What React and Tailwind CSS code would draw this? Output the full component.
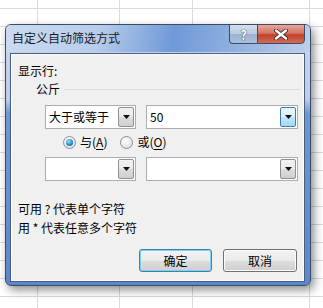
import React from 'react';

const FONT = '"Noto Sans CJK SC", "Noto Sans", sans-serif';

// spreadsheet backdrop: column widths put the grid lines at 37, 119, 192, 309
const COLS = [38, 82, 73, 117];
const ROWS = [9, ...Array(17).fill(18)];

function Sheet() {
  return (
    <div className="flex flex-col">
      {ROWS.map((h, i) => (
        <div key={i} className="flex border-b border-[#dadada]" style={{ height: h }}>
          {COLS.map((w, j) => (
            <div key={j} className="shrink-0 border-r border-[#dadada]" style={{ width: w }} />
          ))}
          <div className="flex-1" />
        </div>
      ))}
    </div>
  );
}

function Arrow() {
  return (
    <svg width="7" height="4" viewBox="0 0 7 4">
      <path d="M0 0h7L3.5 4z" fill="#111" />
    </svg>
  );
}

function Combo({ value, width, focused }) {
  return (
    <div
      className="flex h-[24px] items-stretch border border-[#abadb3] bg-white"
      style={{ width }}
    >
      <div className="flex-1 pl-[3px] text-[12px] leading-[22px] text-black">{value}</div>
      <div
        className={`m-px flex w-[16px] items-center justify-center rounded-[2px] border ${
          focused
            ? 'border-[#3c7fb1] bg-[linear-gradient(to_bottom,#eaf6fd,#d9f0fc_50%,#bee6fd_51%,#a7d9f5)]'
            : 'border-[#8e8f8f] bg-[linear-gradient(to_bottom,#f2f2f2,#ebebeb_50%,#dddddd_51%,#cfcfcf)]'
        }`}
      >
        <Arrow />
      </div>
    </div>
  );
}

function Radio({ checked, label, hot }) {
  return (
    <div className="flex items-center gap-[4px]">
      <div className="flex h-[13px] w-[13px] items-center justify-center rounded-full border border-[#8e8f8f] bg-[radial-gradient(circle_at_40%_35%,#ffffff,#d6d6d6)]">
        {checked && (
          <div className="h-[7px] w-[7px] rounded-full bg-[radial-gradient(circle_at_40%_35%,#9fdcf7,#1c84c6_60%,#0d5a94)]" />
        )}
      </div>
      <span className="text-[12px] leading-[16px] text-black">
        {label}(<span className="underline underline-offset-2">{hot}</span>)
      </span>
    </div>
  );
}

function Button({ children, primary }) {
  return (
    <div
      className={`flex h-[23px] items-center justify-center rounded-[3px] border text-[12px] text-black ${
        primary
          ? 'w-[73px] border-[#3c7fb1] shadow-[inset_0_0_0_1px_#7fd0f5]'
          : 'w-[74px] border-[#707070] shadow-[inset_0_0_0_1px_#fbfbfb]'
      } bg-[linear-gradient(to_bottom,#f2f2f2,#ebebeb_50%,#dddddd_51%,#cfcfcf)]`}
    >
      {children}
    </div>
  );
}

export default function App() {
  return (
    <div className="relative h-[308px] w-[323px] overflow-hidden bg-white" style={{ fontFamily: FONT }}>
      <Sheet />

      {/* dialog window */}
      <div className="absolute left-[5px] top-[24px] flex h-[262px] w-[306px] flex-col rounded-[6px] border border-[#3a4b63] bg-[linear-gradient(to_bottom,#c4d6ee_0px,#bccfeb_74px,#6d98d6_88px,#5a88cf_100%)] shadow-[3px_4px_10px_rgba(0,0,0,0.45)]">
        <div className="flex h-[27px] items-start justify-between rounded-t-[5px] bg-[linear-gradient(100deg,#cadbf0_0%,#b8cdeb_30%,#6f9ad8_55%,#90b0e0_75%,#bcd0ec_100%)]">
          <div className="pl-[6px] pt-[5px] text-[12px] leading-[16px] text-[#1a1a1a]">自定义自动筛选方式</div>
          <div className="-mt-px mr-[5px] flex">
            <div className="flex h-[20px] w-[28px] items-center justify-center rounded-bl-[4px] border border-r-0 border-[#3d4d66] bg-[linear-gradient(to_bottom,#d3deec,#b9cae0_50%,#9cb3d2_51%,#a9c0dc)] text-[13px] font-bold leading-none text-white [text-shadow:0_0_1px_#243247,0_0_1px_#243247]">
              ?
            </div>
            <div className="flex h-[20px] w-[48px] items-center justify-center rounded-br-[4px] border border-[#3d4d66] bg-[linear-gradient(to_bottom,#e6a799,#d47563_45%,#c2412f_55%,#d36b55)]">
              <svg width="14" height="11" viewBox="0 0 14 11">
                <path d="M2 1.5l10 8M12 1.5l-10 8" stroke="#3b2020" strokeWidth="4" strokeLinecap="round" />
                <path d="M2 1.5l10 8M12 1.5l-10 8" stroke="#fff" strokeWidth="2.4" strokeLinecap="round" />
              </svg>
            </div>
          </div>
        </div>

        <div className="flex flex-1 pb-[3px] pl-[4px] pr-[5px] pt-px">
          <div className="flex flex-1 flex-col border border-[#4b5e7c] bg-[#f0f0f0] pl-[7px] shadow-[inset_0_0_0_1px_#fcfcfc]">
            <div className="mt-[9px] text-[12px] leading-[16px] text-black">显示行:</div>
            <div className="mt-[2px] flex items-center gap-[4px] pl-[18px] pr-[4px]">
              <span className="text-[12px] leading-[16px] text-black">公斤</span>
              <div className="h-px flex-1 bg-[#d5dfe5]" />
            </div>
            <div className="mt-[8px] flex gap-[10px] pl-[27px]">
              <Combo value="大于或等于" width={91} />
              <Combo value="50" width={152} focused />
            </div>
            <div className="mt-[5px] flex gap-[13px] pl-[45px]">
              <Radio checked label="与" hot="A" />
              <Radio label="或" hot="O" />
            </div>
            <div className="mt-[7px] flex gap-[10px] pl-[27px]">
              <Combo value="" width={91} />
              <Combo value="" width={152} />
            </div>
            <div className="mt-[20px] text-[12px] leading-[16px] text-black">可用 ? 代表单个字符</div>
            <div className="mt-[3px] text-[12px] leading-[16px] text-black">用 * 代表任意多个字符</div>
            <div className="mt-[13px] flex justify-end gap-[11px] pr-[7px]">
              <Button primary>确定</Button>
              <Button>取消</Button>
            </div>
          </div>
        </div>
      </div>
    </div>
  );
}
